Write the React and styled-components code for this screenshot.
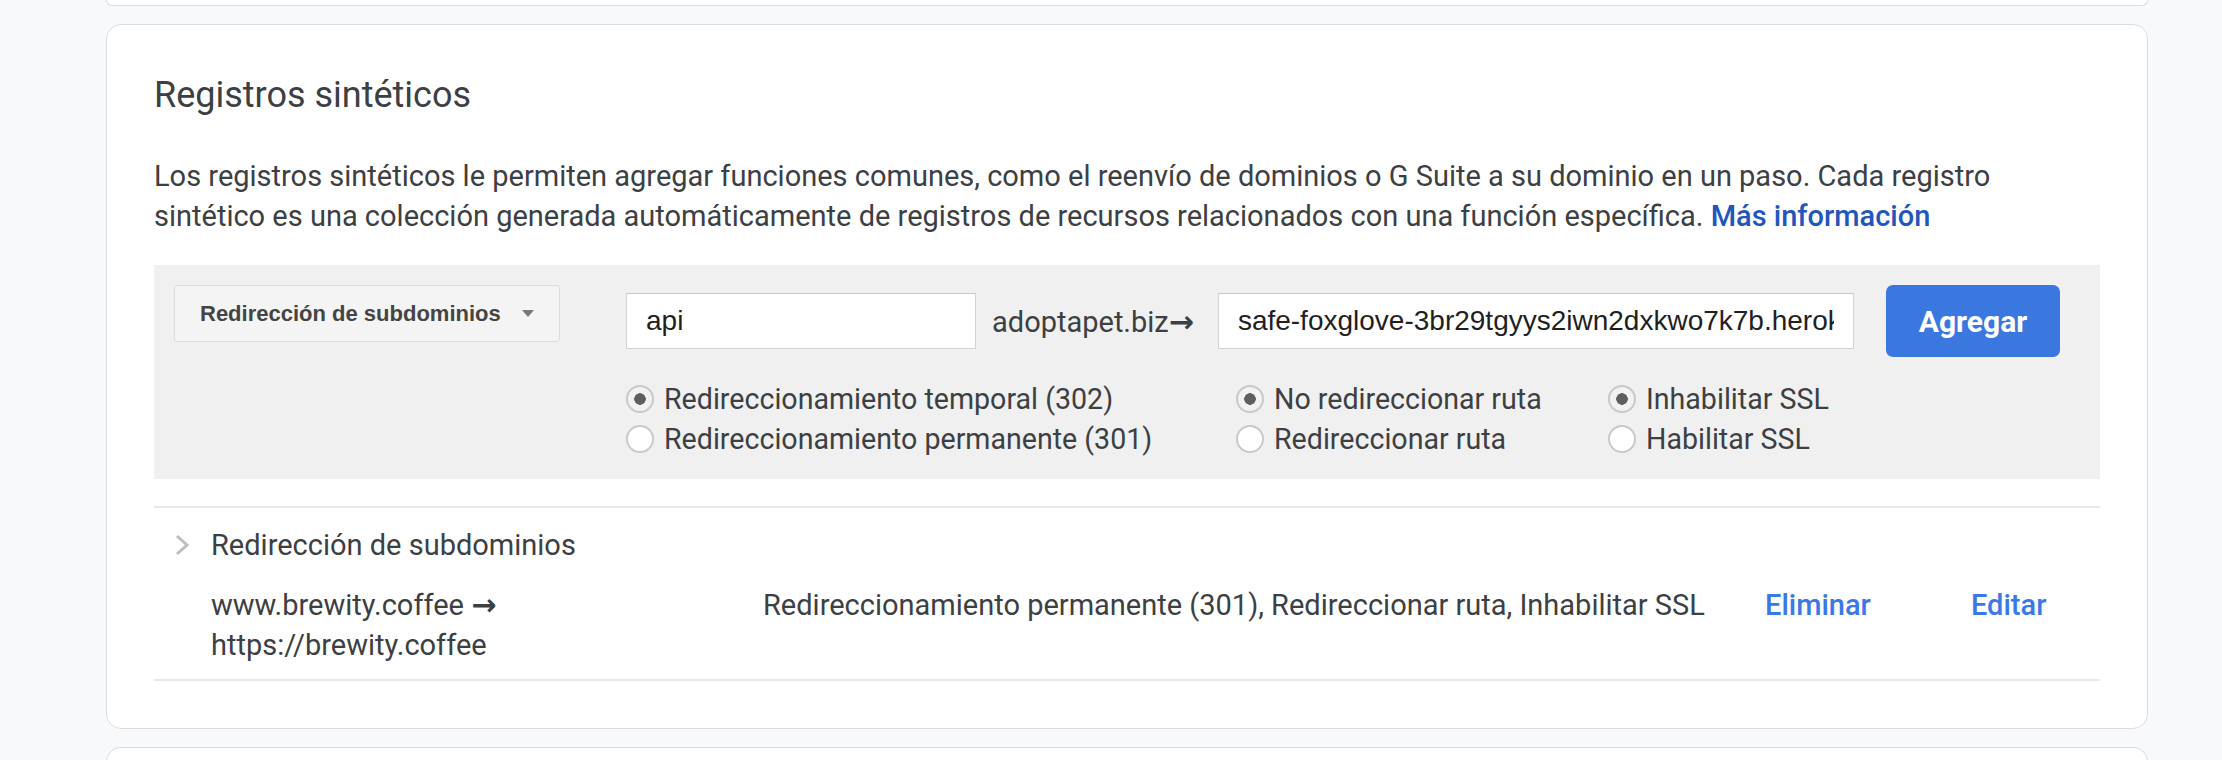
import React from "react";
import styled, { createGlobalStyle } from "styled-components";

const GlobalStyle = createGlobalStyle`
  html, body {
    margin: 0;
    background: #f8f9fa;
    overflow: hidden;
    font-family: Roboto, "Liberation Sans", sans-serif;
  }
`;

const options = [
  {
    width: 610,
    items: [
      { label: "Redireccionamiento temporal (302)", checked: true },
      { label: "Redireccionamiento permanente (301)", checked: false },
    ],
  },
  {
    width: 372,
    items: [
      { label: "No redireccionar ruta", checked: true },
      { label: "Redireccionar ruta", checked: false },
    ],
  },
  {
    width: 0,
    items: [
      { label: "Inhabilitar SSL", checked: true },
      { label: "Habilitar SSL", checked: false },
    ],
  },
];

const App = () => {
  return (
    <>
      <GlobalStyle />
      <Page>
        <PrevCard />
        <Card>
          <Title>Registros sintéticos</Title>
          <Desc>
            Los registros sintéticos le permiten agregar funciones comunes, como el reenvío de dominios o G Suite a su
            dominio en un paso. Cada registro sintético es una colección generada automáticamente de registros de
            recursos relacionados con una función específica. <Link href="#">Más información</Link>
          </Desc>

          <Panel>
            <Select>
              Redirección de subdominios
              <Caret />
            </Select>
            <Main>
              <TopRow>
                <TextInput $width={350} readOnly value="api" />
                <Domain>
                  adoptapet.biz<Arrow>→</Arrow>
                </Domain>
                <TextInput $grow readOnly value="safe-foxglove-3br29tgyys2iwn2dxkwo7k7b.herokudns.com" />
                <AddButton>Agregar</AddButton>
              </TopRow>
              <RadioRow>
                {options.map((group, idx) => (
                  <RadioGroup key={`group_${idx}`} $width={group.width}>
                    {group.items.map((item) => (
                      <RadioItem key={item.label}>
                        <RadioCircle $checked={item.checked} />
                        {item.label}
                      </RadioItem>
                    ))}
                  </RadioGroup>
                ))}
              </RadioRow>
            </Main>
          </Panel>

          <List>
            <GroupHeader>
              <svg width="16" height="22" viewBox="0 0 16 22">
                <polyline points="3,2 13,11 3,20" fill="none" stroke="#bdbdbd" strokeWidth="3" />
              </svg>
              Redirección de subdominios
            </GroupHeader>
            <DataRow>
              <Cell>
                www.brewity.coffee <Arrow>→</Arrow>
                <br />
                https://brewity.coffee
              </Cell>
              <Cell>Redireccionamiento permanente (301), Redireccionar ruta, Inhabilitar SSL</Cell>
              <Action>Eliminar</Action>
              <Action>Editar</Action>
            </DataRow>
          </List>
        </Card>
        <NextCard />
      </Page>
    </>
  );
};

const Page = styled.div`
  width: 2042px;
  margin-left: 106px;
  display: flex;
  flex-direction: column;
  gap: 18px;
`;

const PrevCard = styled.div`
  height: 6px;
  box-sizing: border-box;
  background: #fff;
  border: 1px solid #dadce0;
  border-top: none;
  border-radius: 0 0 14px 14px;
`;

const Card = styled.div`
  background: #fff;
  border: 1px solid #dadce0;
  border-radius: 15px;
  padding: 50px 47px 47px;
`;

const NextCard = styled.div`
  height: 40px;
  background: #fff;
  border: 1px solid #dadce0;
  border-bottom: none;
  border-radius: 15px 15px 0 0;
`;

const Title = styled.h2`
  margin: 0;
  font-size: 36px;
  line-height: 40px;
  font-weight: 400;
  color: #3c4043;
`;

const Desc = styled.p`
  margin: 41px 0 0;
  max-width: 1880px;
  font-size: 29px;
  line-height: 40px;
  color: #3c4043;
`;

const Link = styled.a`
  color: #2256bd;
  font-weight: 500;
  text-decoration: none;
`;

const Panel = styled.div`
  margin-top: 29px;
  background: #f0f0f0;
  display: flex;
  align-items: flex-start;
  padding: 20px 40px 20px 20px;
`;

const Select = styled.div`
  width: 386px;
  height: 57px;
  box-sizing: border-box;
  display: flex;
  align-items: center;
  justify-content: space-between;
  padding: 0 25px;
  background: #f4f4f4;
  border: 1px solid #dcdcdc;
  border-radius: 3px;
  font: bold 22px "Liberation Sans", Arial, sans-serif;
  color: #444;
`;

const Caret = styled.span`
  width: 0;
  height: 0;
  border-left: 6px solid transparent;
  border-right: 6px solid transparent;
  border-top: 7px solid #777;
`;

const Main = styled.div`
  flex: 1;
  margin-left: 66px;
  display: flex;
  flex-direction: column;
`;

const TopRow = styled.div`
  display: flex;
  align-items: center;
  height: 72px;
`;

const TextInput = styled.input`
  width: ${(p) => (p.$grow ? "auto" : `${p.$width}px`)};
  flex: ${(p) => (p.$grow ? "1" : "none")};
  min-width: 0;
  height: 56px;
  box-sizing: border-box;
  border: 1px solid #d3d3d3;
  border-top-color: #c8c8c8;
  background: #fff;
  padding: 0 19px;
  font: 28px "Liberation Sans", Arial, sans-serif;
  color: #1f1f1f;
  outline: none;
`;

const Domain = styled.span`
  margin: 0 24px 0 16px;
  font-size: 29px;
  color: #3c4043;
  white-space: nowrap;
`;

const Arrow = styled.span`
  font-family: "DejaVu Sans", sans-serif;
  font-weight: bold;
  font-size: 30px;
`;

const AddButton = styled.div`
  margin-left: 32px;
  width: 174px;
  height: 72px;
  display: flex;
  align-items: center;
  justify-content: center;
  background: #3a77df;
  border-radius: 7px;
  color: #fff;
  font-size: 30px;
  font-weight: 700;
`;

const RadioRow = styled.div`
  display: flex;
  margin-top: 22px;
`;

const RadioGroup = styled.div`
  width: ${(p) => (p.$width ? `${p.$width}px` : "auto")};
  display: flex;
  flex-direction: column;
`;

const RadioItem = styled.div`
  display: flex;
  align-items: center;
  gap: 10px;
  height: 40px;
  font-size: 28.6px;
  color: #3c4043;
  white-space: nowrap;
`;

const RadioCircle = styled.span`
  width: 28px;
  height: 28px;
  flex: none;
  box-sizing: border-box;
  border-radius: 50%;
  border: 2px solid #c9c9c9;
  background: ${(p) => (p.$checked ? "radial-gradient(circle, #5f5f5f 0 5.5px, #f2f2f2 6px)" : "#fff")};
`;

const List = styled.div`
  margin-top: 27px;
  border-top: 2px solid #e8e8e8;
  border-bottom: 2px solid #e8e8e8;
`;

const GroupHeader = styled.div`
  display: flex;
  align-items: center;
  gap: 21px;
  height: 40px;
  margin-top: 17px;
  padding-left: 20px;
  font-size: 29px;
  color: #3c4043;
`;

const DataRow = styled.div`
  display: grid;
  grid-template-columns: 552px 1002px 206px auto;
  padding: 0 0 14px 57px;
  margin-top: 20px;
  font-size: 29px;
  line-height: 40px;
  color: #3c4043;
`;

const Cell = styled.div``;

const Action = styled.div`
  color: #3b78e7;
  font-weight: 500;
  font-size: 29px;
`;

export default App;
